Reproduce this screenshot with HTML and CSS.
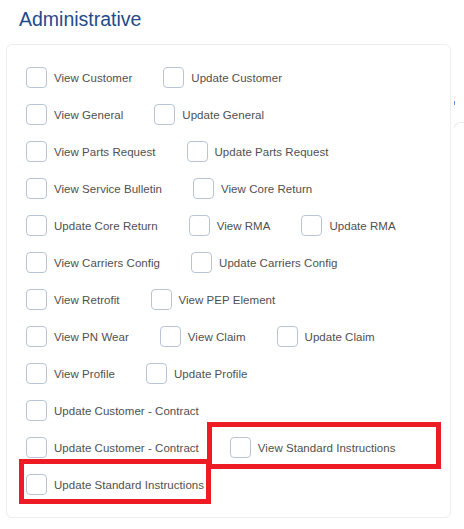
FILE: index.html
```html
<!DOCTYPE html>
<html>
<head>
<meta charset="utf-8">
<link rel="stylesheet" href="styles.css">
</head>
<body>
<div class="page">
  <div class="main">
    <h2 class="title">Administrative</h2>
    <div class="card">
      <div class="row">
        <label class="item"><span class="cb"></span><span class="lbl">View Customer</span></label>
        <label class="item"><span class="cb"></span><span class="lbl">Update Customer</span></label>
      </div>
      <div class="row">
        <label class="item"><span class="cb"></span><span class="lbl">View General</span></label>
        <label class="item"><span class="cb"></span><span class="lbl">Update General</span></label>
      </div>
      <div class="row">
        <label class="item"><span class="cb"></span><span class="lbl">View Parts Request</span></label>
        <label class="item"><span class="cb"></span><span class="lbl">Update Parts Request</span></label>
      </div>
      <div class="row">
        <label class="item"><span class="cb"></span><span class="lbl">View Service Bulletin</span></label>
        <label class="item"><span class="cb"></span><span class="lbl">View Core Return</span></label>
      </div>
      <div class="row">
        <label class="item"><span class="cb"></span><span class="lbl">Update Core Return</span></label>
        <label class="item"><span class="cb"></span><span class="lbl">View RMA</span></label>
        <label class="item"><span class="cb"></span><span class="lbl">Update RMA</span></label>
      </div>
      <div class="row">
        <label class="item"><span class="cb"></span><span class="lbl">View Carriers Config</span></label>
        <label class="item"><span class="cb"></span><span class="lbl">Update Carriers Config</span></label>
      </div>
      <div class="row">
        <label class="item"><span class="cb"></span><span class="lbl">View Retrofit</span></label>
        <label class="item"><span class="cb"></span><span class="lbl">View PEP Element</span></label>
      </div>
      <div class="row">
        <label class="item"><span class="cb"></span><span class="lbl">View PN Wear</span></label>
        <label class="item"><span class="cb"></span><span class="lbl">View Claim</span></label>
        <label class="item"><span class="cb"></span><span class="lbl">Update Claim</span></label>
      </div>
      <div class="row">
        <label class="item"><span class="cb"></span><span class="lbl">View Profile</span></label>
        <label class="item"><span class="cb"></span><span class="lbl">Update Profile</span></label>
      </div>
      <div class="row">
        <label class="item"><span class="cb"></span><span class="lbl">Update Customer - Contract</span></label>
      </div>
      <div class="row">
        <label class="item"><span class="cb"></span><span class="lbl">Update Customer - Contract</span></label>
        <label class="item"><span class="cb"></span><span class="lbl">View Standard Instructions</span></label>
      </div>
      <div class="row">
        <label class="item"><span class="cb"></span><span class="lbl">Update Standard Instructions</span></label>
      </div>
      <div class="mark mark-view"></div>
      <div class="mark mark-update"></div>
    </div>
  </div>
  <div class="side">
    <span class="side-dot"></span>
    <div class="side-card"></div>
  </div>
</div>
</body>
</html>
```

FILE: styles.css
```css
* { box-sizing: border-box; }
html, body { margin: 0; padding: 0; background: #ffffff; }
body {
  font-family: "Liberation Sans", Arial, sans-serif;
  width: 464px;
  height: 529px;
  overflow: hidden;
}
.page {
  display: flex;
  align-items: flex-start;
}
.main {
  width: 451px;
  flex: none;
}
.title {
  margin: 7px 0 13px 19px;
  font-size: 19.5px;
  line-height: 24px;
  font-weight: normal;
  color: #234b8b;
}
.card {
  position: relative;
  margin-left: 6px;
  width: 445px;
  height: 474px;
  border: 1px solid #ededed;
  border-radius: 6px;
  padding: 22px 0 0 19px;
  display: flex;
  flex-direction: column;
  gap: 16px;
}
.row {
  display: flex;
  align-items: center;
  gap: 31px;
  height: 21px;
}
.item {
  display: flex;
  align-items: center;
  gap: 7px;
}
.cb {
  width: 21px;
  height: 21px;
  border: 1px solid #b9c5d6;
  border-radius: 4px;
  background: #fff;
  flex: none;
}
.lbl {
  font-size: 11.5px;
  letter-spacing: 0.04px;
  color: #505050;
  white-space: nowrap;
}
.mark {
  position: absolute;
  border: 5px solid #ed1c24;
}
.mark-view {
  left: 200px;
  top: 377px;
  width: 234px;
  height: 47px;
}
.mark-update {
  left: 12px;
  top: 414px;
  width: 192px;
  height: 45px;
}
.side {
  flex: 1;
  display: flex;
  flex-direction: column;
  padding-left: 3px;
}
.side-dot {
  display: block;
  width: 1px;
  height: 4px;
  margin-top: 101px;
  background: #5b8fd6;
}
.side-card {
  margin-top: 17px;
  height: 6px;
  border-top: 1px solid #ececec;
  border-left: 1px solid #ececec;
  border-top-left-radius: 6px;
}
```
